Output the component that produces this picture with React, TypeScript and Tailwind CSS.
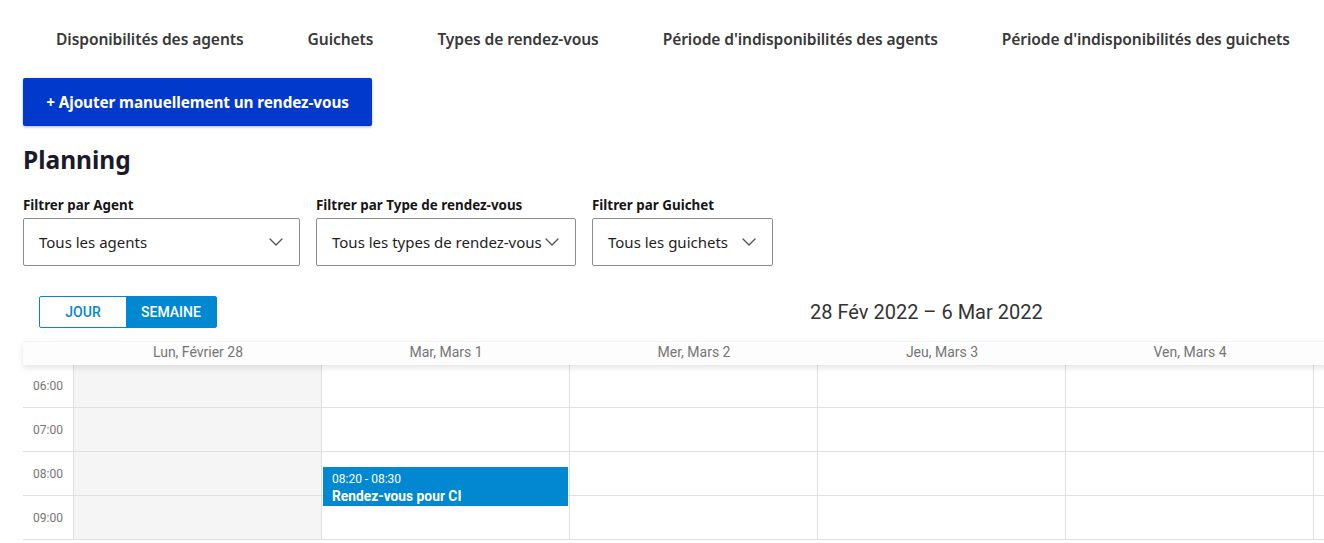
import React from "react";

const navItems = [
  "Disponibilités des agents",
  "Guichets",
  "Types de rendez-vous",
  "Période d'indisponibilités des agents",
  "Période d'indisponibilités des guichets",
];

const days = [
  "Lun, Février 28",
  "Mar, Mars 1",
  "Mer, Mars 2",
  "Jeu, Mars 3",
  "Ven, Mars 4",
  "",
];

const hours = ["06:00", "07:00", "08:00", "09:00"];

function Chevron() {
  return (
    <svg width="14" height="8" viewBox="0 0 14 8" fill="none" className="shrink-0">
      <path d="M1 1l6 6 6-6" stroke="#555" strokeWidth="1.4" strokeLinecap="round" strokeLinejoin="round" />
    </svg>
  );
}

function Select({ label, value, width }: { label: string; value: string; width: string }) {
  return (
    <div className="flex flex-col">
      <div className="text-[13.4px] font-bold text-[#161616] leading-[20px] mb-[3px] whitespace-nowrap">{label}</div>
      <div className={`${width} h-[48px] border border-[#8d8d8d] rounded-[2px] flex items-center justify-between pl-[15px] pr-[16px]`}>
        <span className="text-[15px] text-[#1e1e1e] whitespace-nowrap pt-[1px]">{value}</span>
        <Chevron />
      </div>
    </div>
  );
}

export default function App() {
  return (
    <div className="w-[1324px] h-[543px] overflow-hidden bg-white" style={{ fontFamily: '"Noto Sans", sans-serif' }}>
      <div className="pl-[23px]">
        <nav className="flex pt-[28px] mb-[28px] pl-[33px] gap-[64px]">
          {navItems.map((n) => (
            <div key={n} className="text-[15.6px] font-semibold text-[#383838] leading-[22px] whitespace-nowrap tracking-[-0.1px]">
              {n}
            </div>
          ))}
        </nav>
        <button className="h-[48px] w-[349px] bg-[#0039cb] text-white text-[15.3px] font-bold rounded-[2px] shadow-[0_1px_3px_rgba(0,0,0,0.3)] tracking-[-0.1px]">
          + Ajouter manuellement un rendez-vous
        </button>
        <h1 className="text-[24.5px] font-bold text-[#1a1a2a] leading-[32px] mt-[18px] mb-[19px]">Planning</h1>
        <div className="flex gap-[16px]">
          <Select label="Filtrer par Agent" value="Tous les agents" width="w-[277px]" />
          <Select label="Filtrer par Type de rendez-vous" value="Tous les types de rendez-vous" width="w-[260px]" />
          <Select label="Filtrer par Guichet" value="Tous les guichets" width="w-[181px]" />
        </div>
        <div style={{ fontFamily: "Roboto, sans-serif" }}>
          <div className="flex items-center mt-[30px] pl-[16px] h-[32px]">
            <div className="flex h-[32px] border border-[#0288d1] rounded-[2px]">
              <div className="w-[86px] flex items-center justify-center text-[14px] font-medium text-[#0288d1]">JOUR</div>
              <div className="w-[90px] flex items-center justify-center text-[14px] font-medium text-white bg-[#0288d1]">SEMAINE</div>
            </div>
            <div className="ml-[593px] text-[20px] text-[#333] whitespace-nowrap">28 Fév 2022 – 6 Mar 2022</div>
          </div>
          <div className="mt-[13px] w-[1600px]">
            <div className="flex h-[24px] border-t border-[#f5f5f5] bg-[#fdfdfd] shadow-[0_3px_6px_rgba(0,0,0,0.1)] relative z-10">
              <div className="w-[51px] shrink-0" />
              {days.map((d, i) => (
                <div key={i} className="w-[248px] shrink-0 text-center text-[14px] text-[#757575] leading-[21px]">
                  {d}
                </div>
              ))}
            </div>
            <div className="flex -mt-[1px]">
              <div className="w-[51px] shrink-0 border-r border-[#e0e0e0]">
                {hours.map((h) => (
                  <div key={h} className="h-[44px] border-b border-[#e0e0e0] flex items-center justify-end pr-[10px] text-[12px] text-[#757575]">
                    {h}
                  </div>
                ))}
              </div>
              {days.map((d, i) => (
                <div key={i} className={`w-[248px] shrink-0 border-r border-[#e0e0e0] relative ${i === 0 ? "bg-[#f5f5f5]" : ""}`}>
                  {hours.map((h) => (
                    <div key={h} className="h-[44px] border-b border-[#e0e0e0]" />
                  ))}
                  {i === 1 && (
                    <div className="absolute left-[1px] top-[103px] w-[245px] h-[39px] bg-[#0288d1] text-white pl-[9px] pt-[4px]">
                      <div className="text-[12px] leading-[16px]">08:20 - 08:30</div>
                      <div className="text-[13.8px] font-bold leading-[18px]">Rendez-vous pour CI</div>
                    </div>
                  )}
                </div>
              ))}
            </div>
          </div>
        </div>
      </div>
    </div>
  );
}
